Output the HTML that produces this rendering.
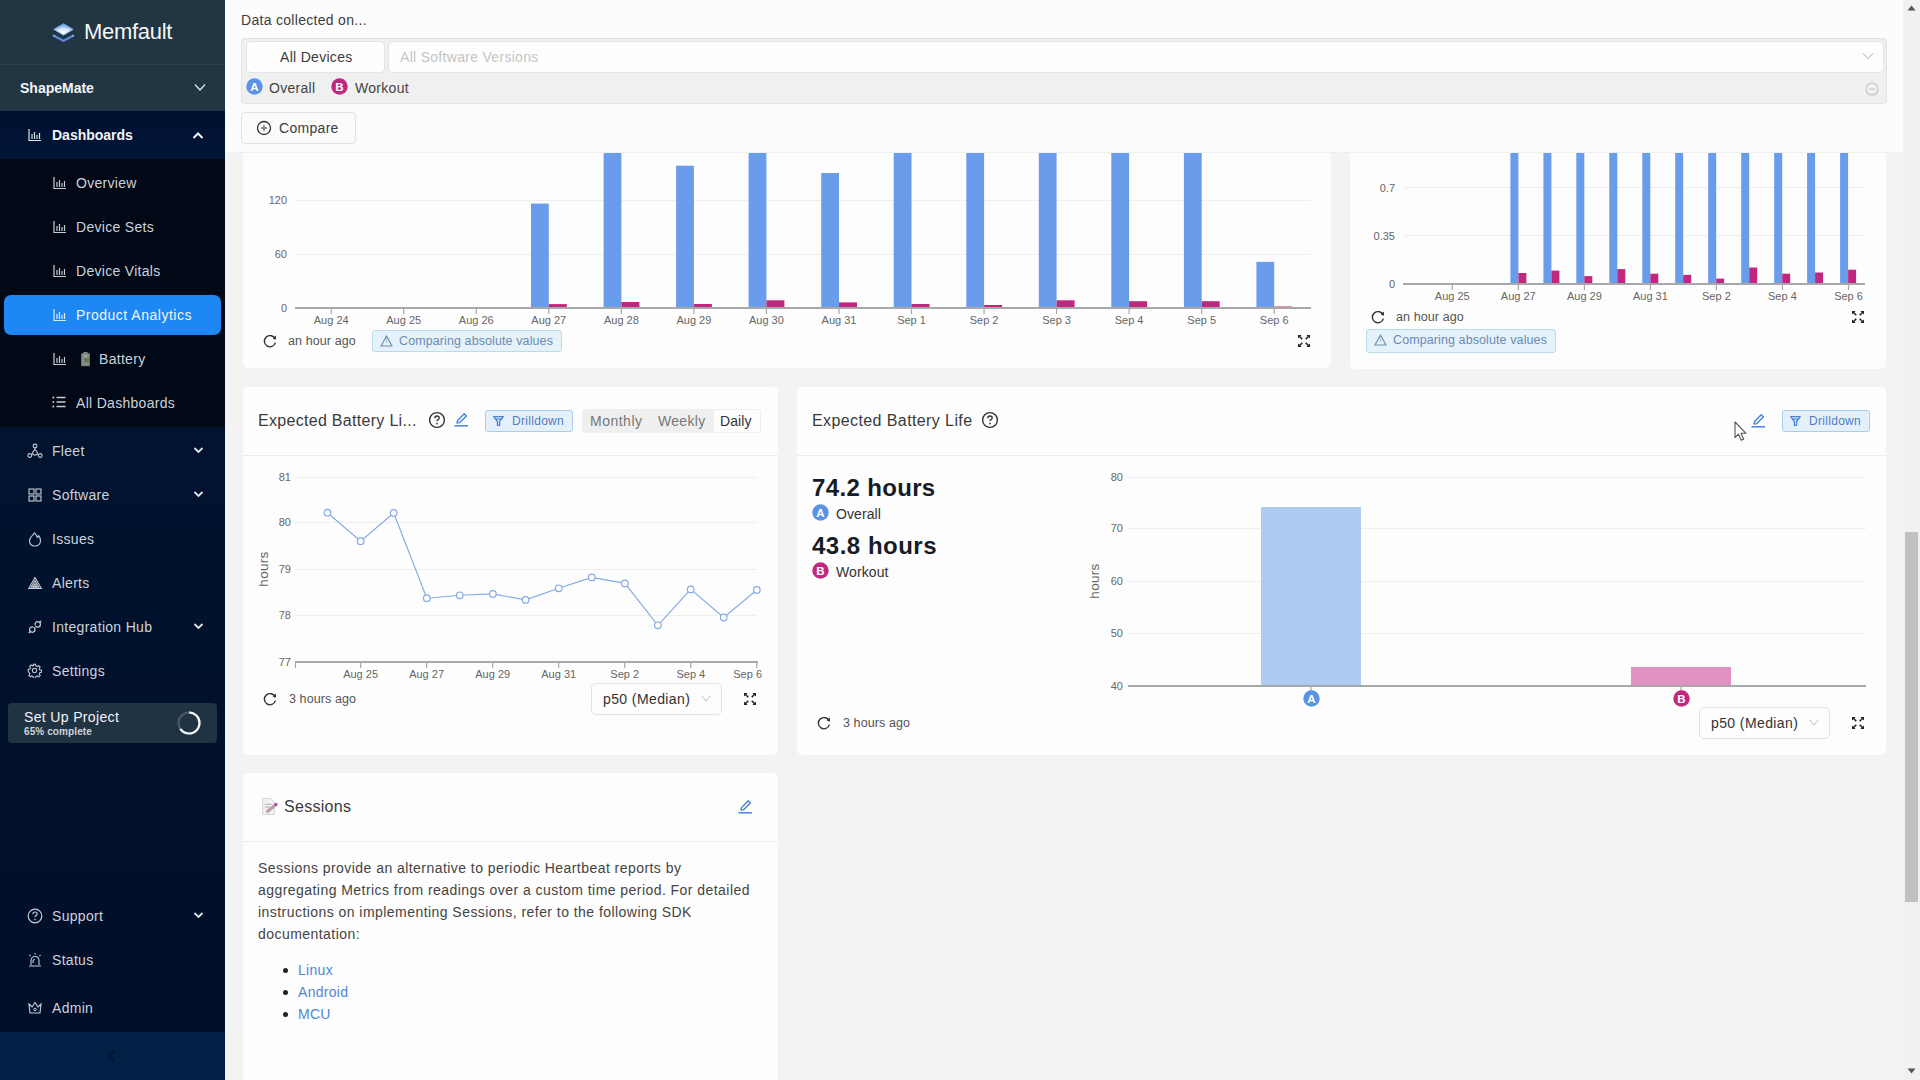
<!DOCTYPE html>
<html><head><meta charset="utf-8">
<style>
*{box-sizing:border-box;margin:0;padding:0}
html,body{width:1920px;height:1080px;overflow:hidden;background:#f3f3f3;font-family:"Liberation Sans",sans-serif;color:#333}
.abs{position:absolute}
#sb{position:absolute;left:0;top:0;width:225px;height:1080px;background:linear-gradient(#01132f 427px,#010f29 1000px)}
#sb .sec1{position:absolute;left:0;top:0;width:225px;height:111px;background:#213543}
#sb .logo-div{position:absolute;left:0;top:64px;width:225px;height:1px;background:#2f3e4b}
#sb .dash{position:absolute;left:0;top:111px;width:225px;height:48px;background:linear-gradient(#001030,#011637)}
#sb .subs{position:absolute;left:0;top:159px;width:225px;height:268px;background:#010816}
#sb .bot{position:absolute;left:0;top:1032px;width:225px;height:48px;background:#012146}
.nav{position:absolute;font-size:14px;letter-spacing:0.3px;color:#ccd2db;white-space:nowrap;line-height:16px}
.nav.w{color:#f3f5f8}
.ic{position:absolute}
#main{position:absolute;left:225px;top:0;width:1678px;height:1080px;background:#f3f3f3;overflow:hidden}
#hdr{position:absolute;left:225px;top:0;width:1678px;height:153px;background:#fcfcfc;border-bottom:1px solid #efefef;z-index:5}
.t{position:absolute;white-space:nowrap;letter-spacing:0.3px}
.card{position:absolute;background:#fdfdfd;border-radius:5px}
#scroll{position:absolute;left:1903px;top:0;width:17px;height:1080px;background:#f1f1f1}
</style></head><body>

<!-- SIDEBAR -->
<div id="sb">
  <div class="sec1"></div>
  <div class="logo-div"></div>
  <div class="dash"></div>
  <div class="subs"></div>
  <div class="bot"></div>
  <!-- logo -->
  <svg class="ic" style="left:52px;top:22px" width="23" height="21" viewBox="0 0 23 21">
    <defs><radialGradient id="lg1" cx="0.5" cy="0.75" r="0.7"><stop offset="0" stop-color="#ffffff"/><stop offset="0.45" stop-color="#d8e6fa"/><stop offset="1" stop-color="#5f98ea"/></radialGradient></defs>
    <path d="M1.6 12.8 L11.5 18 L21.4 12.8 L22 14.1 L11.5 19.6 L1 14.1 Z" fill="#5b92e6" stroke="#5b92e6" stroke-width="0.8" stroke-linejoin="round"/>
    <path d="M1.2 12.9 L3.2 14 L2 14.7 Z M21.8 12.9 L19.8 14 L21 14.7 Z" fill="#dfe9f8"/>
    <path d="M11.5 1.8 L21.2 7.4 L11.5 13.2 L1.8 7.4 Z" fill="url(#lg1)" stroke="#7aa8ee" stroke-width="1" stroke-linejoin="round"/>
  </svg>
  <div class="nav" style="left:84px;top:19px;font-size:22px;line-height:26px;letter-spacing:-0.3px;color:#f4f6f8">Memfault</div>
  <div class="nav" style="left:20px;top:80px;font-weight:700;color:#f4f6f8;letter-spacing:0">ShapeMate</div>
  <svg class="ic" style="left:194px;top:83px" width="12" height="9" viewBox="0 0 12 9"><path d="M1 1.5 L6 7 L11 1.5" fill="none" stroke="#dfe3e8" stroke-width="1.3"/></svg>

  <!-- Dashboards -->
  <svg class="ic" style="left:28px;top:128px" width="14" height="14" viewBox="0 0 14 14"><path d="M1 1 V12.5 H13 M4 11 V6 M6.5 11 V4 M9 11 V7 M11.5 11 V5" fill="none" stroke="#dfe3ea" stroke-width="1.2"/></svg>
  <div class="nav w" style="left:52px;top:127px;font-weight:700;letter-spacing:0">Dashboards</div>
  <svg class="ic" style="left:192px;top:131px" width="12" height="9" viewBox="0 0 12 9"><path d="M1.5 7 L6 2.5 L10.5 7" fill="none" stroke="#f0f2f5" stroke-width="2"/></svg>

  <!-- sub items -->
  <div id="subitems"></div>
  <svg class="ic" style="left:53px;top:176px" width="14" height="14" viewBox="0 0 14 14"><path d="M1 1 V12.5 H13 M4 11 V6 M6.5 11 V4 M9 11 V7 M11.5 11 V5" fill="none" stroke="#c9ced6" stroke-width="1.2"/></svg>
  <div class="nav" style="left:76px;top:175px">Overview</div>
  <svg class="ic" style="left:53px;top:220px" width="14" height="14" viewBox="0 0 14 14"><path d="M1 1 V12.5 H13 M4 11 V6 M6.5 11 V4 M9 11 V7 M11.5 11 V5" fill="none" stroke="#c9ced6" stroke-width="1.2"/></svg>
  <div class="nav" style="left:76px;top:219px">Device Sets</div>
  <svg class="ic" style="left:53px;top:264px" width="14" height="14" viewBox="0 0 14 14"><path d="M1 1 V12.5 H13 M4 11 V6 M6.5 11 V4 M9 11 V7 M11.5 11 V5" fill="none" stroke="#c9ced6" stroke-width="1.2"/></svg>
  <div class="nav" style="left:76px;top:263px">Device Vitals</div>

  <div class="abs" style="left:4px;top:295px;width:217px;height:40px;border-radius:7px;background:#1d87f4"></div>
  <svg class="ic" style="left:53px;top:308px" width="14" height="14" viewBox="0 0 14 14"><path d="M1 1 V12.5 H13 M4 11 V6 M6.5 11 V4 M9 11 V7 M11.5 11 V5" fill="none" stroke="#dce9fb" stroke-width="1.2"/></svg>
  <div class="nav w" style="left:76px;top:307px;letter-spacing:0.5px">Product Analytics</div>

  <svg class="ic" style="left:53px;top:352px" width="14" height="14" viewBox="0 0 14 14"><path d="M1 1 V12.5 H13 M4 11 V6 M6.5 11 V4 M9 11 V7 M11.5 11 V5" fill="none" stroke="#c9ced6" stroke-width="1.2"/></svg>
  <svg class="ic" style="left:81px;top:352px" width="9" height="15" viewBox="0 0 9 15"><rect x="2.5" y="0" width="4" height="1.5" fill="#8d8d8d"/><rect x="0" y="1.3" width="9" height="13" rx="0.8" fill="#5f7a4c"/><rect x="1.2" y="1.6" width="6.6" height="4.4" fill="#8e8e8e"/><rect x="0.9" y="6" width="2.2" height="4" fill="#8a8a8a"/><rect x="0.9" y="10.3" width="7.2" height="3.2" fill="#8c8c8c"/><circle cx="4.5" cy="4.2" r="1.2" fill="#a0a0a0"/></svg>
  <div class="nav" style="left:99px;top:351px">Battery</div>

  <svg class="ic" style="left:52px;top:396px" width="14" height="12" viewBox="0 0 14 12"><path d="M4.5 1.5 H13.5 M4.5 6 H13.5 M4.5 10.5 H13.5" stroke="#c9ced6" stroke-width="1.3"/><circle cx="1.3" cy="1.5" r="1" fill="#c9ced6"/><circle cx="1.3" cy="6" r="1" fill="#c9ced6"/><circle cx="1.3" cy="10.5" r="1" fill="#c9ced6"/></svg>
  <div class="nav" style="left:76px;top:395px">All Dashboards</div>

  <!-- main nav -->
  <svg class="ic" style="left:27px;top:443px" width="16" height="16" viewBox="0 0 16 16"><circle cx="8" cy="3" r="1.9" fill="none" stroke="#c9ced6" stroke-width="1.1"/><path d="M8 4.9 V6.6 M5.6 11.2 L6 8.6 L8 6.6 L10 8.6 L10.4 11.2 L8 12.3 Z" fill="none" stroke="#c9ced6" stroke-width="1.1" stroke-linejoin="round"/><circle cx="2.8" cy="12.5" r="1.9" fill="none" stroke="#c9ced6" stroke-width="1.1"/><circle cx="13.2" cy="12.5" r="1.9" fill="none" stroke="#c9ced6" stroke-width="1.1"/></svg>
  <div class="nav" style="left:52px;top:443px">Fleet</div>
  <svg class="ic" style="left:193px;top:446px" width="11" height="8" viewBox="0 0 11 8"><path d="M1.5 2 L5.5 6 L9.5 2" fill="none" stroke="#dfe3e8" stroke-width="1.8"/></svg>

  <svg class="ic" style="left:28px;top:488px" width="14" height="14" viewBox="0 0 14 14"><rect x="1" y="1" width="5" height="5" fill="none" stroke="#c9ced6" stroke-width="1.1"/><rect x="8" y="1" width="5" height="5" fill="none" stroke="#c9ced6" stroke-width="1.1"/><rect x="1" y="8" width="5" height="5" fill="none" stroke="#c9ced6" stroke-width="1.1"/><rect x="8" y="8" width="5" height="5" fill="none" stroke="#c9ced6" stroke-width="1.1"/></svg>
  <div class="nav" style="left:52px;top:487px">Software</div>
  <svg class="ic" style="left:193px;top:490px" width="11" height="8" viewBox="0 0 11 8"><path d="M1.5 2 L5.5 6 L9.5 2" fill="none" stroke="#dfe3e8" stroke-width="1.8"/></svg>

  <svg class="ic" style="left:28px;top:531px" width="14" height="16" viewBox="0 0 14 16"><path d="M6.5 1.8 C8.2 3.5 9 5 9.2 6.6 C9.8 5.8 10.2 5.2 10.6 4.6 C11.8 6 12.5 7.8 12.5 9.8 C12.5 13 10.2 15 7 15 C3.8 15 1.5 13 1.5 9.8 C1.5 7.6 2.8 5.8 4.2 4.6 C5 3.8 6 2.8 6.5 1.8 Z" fill="none" stroke="#c9ced6" stroke-width="1.1" stroke-linejoin="round"/></svg>
  <div class="nav" style="left:52px;top:531px">Issues</div>

  <svg class="ic" style="left:27px;top:575px" width="16" height="14" viewBox="0 0 16 14"><path d="M8 2.6 L14.4 13.6 H1.6 Z M8 5.6 L11.9 12.2 H4.1 Z M8 8.4 L9.7 11.2 H6.3 Z" fill="none" stroke="#c9ced6" stroke-width="1.05"/></svg>
  <div class="nav" style="left:52px;top:575px">Alerts</div>

  <svg class="ic" style="left:27px;top:619px" width="16" height="16" viewBox="0 0 16 16"><circle cx="5.3" cy="10.6" r="2.7" fill="none" stroke="#c9ced6" stroke-width="1.2"/><circle cx="10.7" cy="5.4" r="2.7" fill="none" stroke="#c9ced6" stroke-width="1.2"/><path d="M3.4 12.5 L1.8 14.1 M12.6 3.5 L14.2 1.9" stroke="#c9ced6" stroke-width="1.3"/><path d="M6.2 8 L8.2 6.2" stroke="#010f2a" stroke-width="1.4"/></svg>
  <div class="nav" style="left:52px;top:619px">Integration Hub</div>
  <svg class="ic" style="left:193px;top:622px" width="11" height="8" viewBox="0 0 11 8"><path d="M1.5 2 L5.5 6 L9.5 2" fill="none" stroke="#dfe3e8" stroke-width="1.8"/></svg>

  <svg class="ic" style="left:27px;top:663px" width="15" height="15" viewBox="0 0 24 24"><path d="M12 8.5a3.5 3.5 0 1 0 0 7a3.5 3.5 0 1 0 0-7z M10.3 2h3.4l.6 2.8 2 .9 2.4-1.6 2.4 2.4-1.6 2.4.9 2 2.8.6v3.4l-2.8.6-.9 2 1.6 2.4-2.4 2.4-2.4-1.6-2 .9-.6 2.8h-3.4l-.6-2.8-2-.9-2.4 1.6-2.4-2.4 1.6-2.4-.9-2L2 13.7v-3.4l2.8-.6.9-2L4.1 5.3l2.4-2.4 2.4 1.6 2-.9z" fill="none" stroke="#c9ced6" stroke-width="1.7"/></svg>
  <div class="nav" style="left:52px;top:663px">Settings</div>

  <!-- setup project -->
  <div class="abs" style="left:8px;top:703px;width:209px;height:40px;border-radius:4px;background:#203343"></div>
  <div class="nav" style="left:24px;top:709px;color:#f2f4f6;letter-spacing:0.35px">Set Up Project</div>
  <div class="nav" style="left:24px;top:726px;font-size:10px;line-height:12px;font-weight:700;color:#cdd3da;letter-spacing:0.1px">65% complete</div>
  <svg class="ic" style="left:176px;top:710px" width="26" height="26" viewBox="0 0 26 26"><circle cx="13" cy="13" r="10.5" fill="none" stroke="#4a5866" stroke-width="2.2"/><circle cx="13" cy="13" r="10.5" fill="none" stroke="#f4f6f8" stroke-width="2.2" stroke-dasharray="42.9 66" transform="rotate(-90 13 13)"/></svg>

  <!-- bottom nav -->
  <svg class="ic" style="left:27px;top:908px" width="16" height="16" viewBox="0 0 16 16"><circle cx="8" cy="8" r="6.8" fill="none" stroke="#c9ced6" stroke-width="1.2"/><path d="M5.8 6.2 C5.8 4.8 6.8 4 8 4 C9.3 4 10.2 4.8 10.2 6 C10.2 7.5 8 7.6 8 9.3" fill="none" stroke="#c9ced6" stroke-width="1.2"/><circle cx="8" cy="11.6" r="0.8" fill="#c9ced6"/></svg>
  <div class="nav" style="left:52px;top:908px">Support</div>
  <svg class="ic" style="left:193px;top:911px" width="11" height="8" viewBox="0 0 11 8"><path d="M1.5 2 L5.5 6 L9.5 2" fill="none" stroke="#dfe3e8" stroke-width="1.8"/></svg>

  <svg class="ic" style="left:28px;top:952px" width="14" height="15" viewBox="0 0 14 15"><path d="M3 13 V9 C3 6.2 4.8 4.5 7 4.5 C9.2 4.5 11 6.2 11 9 V13 M1 14 H13 M7 1 V2.5 M1.5 3 L2.5 4 M12.5 3 L11.5 4 M5 11 V9.5 C5 8.5 5.8 7.5 7 7.5" fill="none" stroke="#c9ced6" stroke-width="1.1"/></svg>
  <div class="nav" style="left:52px;top:952px">Status</div>

  <svg class="ic" style="left:28px;top:1001px" width="14" height="13" viewBox="0 0 14 13"><path d="M1 3 L4 6 L7 1.5 L10 6 L13 3 L12 12 H2 Z" fill="none" stroke="#c9ced6" stroke-width="1.1"/><circle cx="7" cy="8.5" r="1.3" fill="none" stroke="#c9ced6" stroke-width="1"/></svg>
  <div class="nav" style="left:52px;top:1000px">Admin</div>

  <svg class="ic" style="left:107px;top:1049px" width="9" height="13" viewBox="0 0 9 13"><path d="M7 1.5 L2.5 6.5 L7 11.5" fill="none" stroke="#061326" stroke-width="1.6"/></svg>
</div>

<!-- MAIN -->
<div id="main"></div>
<div class="card" style="left:243px;top:60px;width:1088px;height:308px"></div>
<svg class="abs" style="left:0;top:0;z-index:1" width="1920" height="1080">
<line x1="295" y1="146.5" x2="1311" y2="146.5" stroke="#eeeeee" stroke-width="1"/>
<line x1="295" y1="200.5" x2="1311" y2="200.5" stroke="#eeeeee" stroke-width="1"/>
<line x1="295" y1="254.5" x2="1311" y2="254.5" stroke="#eeeeee" stroke-width="1"/>
<rect x="531.0" y="203.6" width="17.8" height="104.4" fill="#6a9cec"/>
<rect x="548.8" y="304.1" width="18" height="3.9" fill="#c0287f"/>
<rect x="603.6" y="60" width="17.8" height="248.0" fill="#6a9cec"/>
<rect x="621.4" y="302" width="18" height="6.0" fill="#c0287f"/>
<rect x="676.1" y="165.7" width="17.8" height="142.3" fill="#6a9cec"/>
<rect x="693.9" y="304" width="18" height="4.0" fill="#c0287f"/>
<rect x="748.6" y="60" width="17.8" height="248.0" fill="#6a9cec"/>
<rect x="766.4" y="300.3" width="18" height="7.7" fill="#c0287f"/>
<rect x="821.2" y="173" width="17.8" height="135.0" fill="#6a9cec"/>
<rect x="839.0" y="302.4" width="18" height="5.6" fill="#c0287f"/>
<rect x="893.7" y="60" width="17.8" height="248.0" fill="#6a9cec"/>
<rect x="911.5" y="304" width="18" height="4.0" fill="#c0287f"/>
<rect x="966.3" y="60" width="17.8" height="248.0" fill="#6a9cec"/>
<rect x="984.1" y="305" width="18" height="3.0" fill="#c0287f"/>
<rect x="1038.8" y="60" width="17.8" height="248.0" fill="#6a9cec"/>
<rect x="1056.6" y="300.3" width="18" height="7.7" fill="#c0287f"/>
<rect x="1111.3" y="60" width="17.8" height="248.0" fill="#6a9cec"/>
<rect x="1129.1" y="301.2" width="18" height="6.8" fill="#c0287f"/>
<rect x="1183.9" y="60" width="17.8" height="248.0" fill="#6a9cec"/>
<rect x="1201.7" y="301.2" width="18" height="6.8" fill="#c0287f"/>
<rect x="1256.4" y="261.9" width="17.8" height="46.1" fill="#6a9cec"/>
<rect x="1274.2" y="306.5" width="18" height="1.5" fill="#c0287f"/>
<line x1="295" y1="308" x2="1311" y2="308" stroke="#a8a8a8" stroke-width="2"/>
<line x1="331.2" y1="309" x2="331.2" y2="314" stroke="#a8a8a8" stroke-width="1.2"/>
<text x="331.2" y="324" font-family="Liberation Sans" font-size="11" fill="#666" text-anchor="middle">Aug 24</text>
<line x1="403.7" y1="309" x2="403.7" y2="314" stroke="#a8a8a8" stroke-width="1.2"/>
<text x="403.7" y="324" font-family="Liberation Sans" font-size="11" fill="#666" text-anchor="middle">Aug 25</text>
<line x1="476.3" y1="309" x2="476.3" y2="314" stroke="#a8a8a8" stroke-width="1.2"/>
<text x="476.3" y="324" font-family="Liberation Sans" font-size="11" fill="#666" text-anchor="middle">Aug 26</text>
<line x1="548.8" y1="309" x2="548.8" y2="314" stroke="#a8a8a8" stroke-width="1.2"/>
<text x="548.8" y="324" font-family="Liberation Sans" font-size="11" fill="#666" text-anchor="middle">Aug 27</text>
<line x1="621.4" y1="309" x2="621.4" y2="314" stroke="#a8a8a8" stroke-width="1.2"/>
<text x="621.4" y="324" font-family="Liberation Sans" font-size="11" fill="#666" text-anchor="middle">Aug 28</text>
<line x1="693.9" y1="309" x2="693.9" y2="314" stroke="#a8a8a8" stroke-width="1.2"/>
<text x="693.9" y="324" font-family="Liberation Sans" font-size="11" fill="#666" text-anchor="middle">Aug 29</text>
<line x1="766.4" y1="309" x2="766.4" y2="314" stroke="#a8a8a8" stroke-width="1.2"/>
<text x="766.4" y="324" font-family="Liberation Sans" font-size="11" fill="#666" text-anchor="middle">Aug 30</text>
<line x1="839.0" y1="309" x2="839.0" y2="314" stroke="#a8a8a8" stroke-width="1.2"/>
<text x="839.0" y="324" font-family="Liberation Sans" font-size="11" fill="#666" text-anchor="middle">Aug 31</text>
<line x1="911.5" y1="309" x2="911.5" y2="314" stroke="#a8a8a8" stroke-width="1.2"/>
<text x="911.5" y="324" font-family="Liberation Sans" font-size="11" fill="#666" text-anchor="middle">Sep 1</text>
<line x1="984.1" y1="309" x2="984.1" y2="314" stroke="#a8a8a8" stroke-width="1.2"/>
<text x="984.1" y="324" font-family="Liberation Sans" font-size="11" fill="#666" text-anchor="middle">Sep 2</text>
<line x1="1056.6" y1="309" x2="1056.6" y2="314" stroke="#a8a8a8" stroke-width="1.2"/>
<text x="1056.6" y="324" font-family="Liberation Sans" font-size="11" fill="#666" text-anchor="middle">Sep 3</text>
<line x1="1129.1" y1="309" x2="1129.1" y2="314" stroke="#a8a8a8" stroke-width="1.2"/>
<text x="1129.1" y="324" font-family="Liberation Sans" font-size="11" fill="#666" text-anchor="middle">Sep 4</text>
<line x1="1201.7" y1="309" x2="1201.7" y2="314" stroke="#a8a8a8" stroke-width="1.2"/>
<text x="1201.7" y="324" font-family="Liberation Sans" font-size="11" fill="#666" text-anchor="middle">Sep 5</text>
<line x1="1274.2" y1="309" x2="1274.2" y2="314" stroke="#a8a8a8" stroke-width="1.2"/>
<text x="1274.2" y="324" font-family="Liberation Sans" font-size="11" fill="#666" text-anchor="middle">Sep 6</text>
<text x="287" y="204" font-family="Liberation Sans" font-size="11" fill="#666" text-anchor="end">120</text>
<text x="287" y="258" font-family="Liberation Sans" font-size="11" fill="#666" text-anchor="end">60</text>
<text x="287" y="312" font-family="Liberation Sans" font-size="11" fill="#666" text-anchor="end">0</text>
</svg>
<svg class="abs" style="left:262px;top:333px;z-index:2" width="16" height="16" viewBox="0 0 16 16"><path d="M13.2 6.2 A5.6 5.6 0 1 0 13.4 9.6" fill="none" stroke="#333" stroke-width="1.4"/><path d="M10.6 5.6 L14 6.4 L13.9 2.6 Z" fill="#333"/></svg>
<div class="t" style="left:288px;top:334px;font-size:12.5px;line-height:15px;color:#555;letter-spacing:0.1px;font-weight:400;z-index:2;">an hour ago</div>
<div class="abs" style="left:372px;top:330px;width:190px;height:22px;background:#e5f2f9;border:1px solid #b9dcec;border-radius:3px;z-index:2"></div><svg class="abs" style="left:380px;top:335px;z-index:2" width="13" height="12" viewBox="0 0 13 12"><path d="M6.5 1 L12 11 H1 Z" fill="none" stroke="#6d8cb0" stroke-width="1.2" stroke-linejoin="round"/><path d="M6.5 4.5 V7.8" stroke="#9bb6d0" stroke-width="1"/></svg><div class="t" style="left:399px;top:334px;font-size:12.5px;line-height:15px;color:#6b8bb3;letter-spacing:0.1px;z-index:2">Comparing absolute values</div>
<svg class="abs" style="left:1298px;top:335px;z-index:2" width="12" height="12" viewBox="0 0 12 12"><path d="M0.5 0.5 L4.3 4.3 M11.5 0.5 L7.7 4.3 M0.5 11.5 L4.3 7.7 M11.5 11.5 L7.7 7.7" stroke="#222" stroke-width="1.5"/><path d="M0 0 H3.6 L0 3.6 Z M12 0 H8.4 L12 3.6 Z M0 12 H3.6 L0 8.4 Z M12 12 H8.4 L12 8.4 Z" fill="#222"/></svg>
<div class="card" style="left:1350px;top:60px;width:536px;height:309px"></div>
<svg class="abs" style="left:0;top:0;z-index:1" width="1920" height="1080">
<line x1="1403" y1="139.5" x2="1865" y2="139.5" stroke="#eeeeee" stroke-width="1"/>
<line x1="1403" y1="187.5" x2="1865" y2="187.5" stroke="#eeeeee" stroke-width="1"/>
<line x1="1403" y1="235.5" x2="1865" y2="235.5" stroke="#eeeeee" stroke-width="1"/>
<rect x="1510.4" y="60" width="8" height="223.8" fill="#6a9cec"/>
<rect x="1518.4" y="273" width="8" height="10.8" fill="#c0287f"/>
<rect x="1543.4" y="60" width="8" height="223.8" fill="#6a9cec"/>
<rect x="1551.4" y="270.6" width="8" height="13.2" fill="#c0287f"/>
<rect x="1576.3" y="60" width="8" height="223.8" fill="#6a9cec"/>
<rect x="1584.3" y="276.1" width="8" height="7.7" fill="#c0287f"/>
<rect x="1609.3" y="60" width="8" height="223.8" fill="#6a9cec"/>
<rect x="1617.3" y="269.1" width="8" height="14.7" fill="#c0287f"/>
<rect x="1642.3" y="60" width="8" height="223.8" fill="#6a9cec"/>
<rect x="1650.3" y="273.7" width="8" height="10.1" fill="#c0287f"/>
<rect x="1675.2" y="60" width="8" height="223.8" fill="#6a9cec"/>
<rect x="1683.2" y="274.9" width="8" height="8.9" fill="#c0287f"/>
<rect x="1708.2" y="60" width="8" height="223.8" fill="#6a9cec"/>
<rect x="1716.2" y="278.6" width="8" height="5.2" fill="#c0287f"/>
<rect x="1741.2" y="60" width="8" height="223.8" fill="#6a9cec"/>
<rect x="1749.2" y="267.5" width="8" height="16.3" fill="#c0287f"/>
<rect x="1774.2" y="60" width="8" height="223.8" fill="#6a9cec"/>
<rect x="1782.2" y="273.7" width="8" height="10.1" fill="#c0287f"/>
<rect x="1807.1" y="60" width="8" height="223.8" fill="#6a9cec"/>
<rect x="1815.1" y="272.5" width="8" height="11.3" fill="#c0287f"/>
<rect x="1840.1" y="60" width="8" height="223.8" fill="#6a9cec"/>
<rect x="1848.1" y="269.7" width="8" height="14.1" fill="#c0287f"/>
<line x1="1403" y1="284" x2="1865" y2="284" stroke="#a8a8a8" stroke-width="2"/>
<line x1="1452.3" y1="285" x2="1452.3" y2="290" stroke="#a8a8a8" stroke-width="1.2"/>
<text x="1452.3" y="300" font-family="Liberation Sans" font-size="11" fill="#666" text-anchor="middle">Aug 25</text>
<line x1="1518.3" y1="285" x2="1518.3" y2="290" stroke="#a8a8a8" stroke-width="1.2"/>
<text x="1518.3" y="300" font-family="Liberation Sans" font-size="11" fill="#666" text-anchor="middle">Aug 27</text>
<line x1="1584.4" y1="285" x2="1584.4" y2="290" stroke="#a8a8a8" stroke-width="1.2"/>
<text x="1584.4" y="300" font-family="Liberation Sans" font-size="11" fill="#666" text-anchor="middle">Aug 29</text>
<line x1="1650.4" y1="285" x2="1650.4" y2="290" stroke="#a8a8a8" stroke-width="1.2"/>
<text x="1650.4" y="300" font-family="Liberation Sans" font-size="11" fill="#666" text-anchor="middle">Aug 31</text>
<line x1="1716.4" y1="285" x2="1716.4" y2="290" stroke="#a8a8a8" stroke-width="1.2"/>
<text x="1716.4" y="300" font-family="Liberation Sans" font-size="11" fill="#666" text-anchor="middle">Sep 2</text>
<line x1="1782.4" y1="285" x2="1782.4" y2="290" stroke="#a8a8a8" stroke-width="1.2"/>
<text x="1782.4" y="300" font-family="Liberation Sans" font-size="11" fill="#666" text-anchor="middle">Sep 4</text>
<line x1="1848.5" y1="285" x2="1848.5" y2="290" stroke="#a8a8a8" stroke-width="1.2"/>
<text x="1848.5" y="300" font-family="Liberation Sans" font-size="11" fill="#666" text-anchor="middle">Sep 6</text>
<text x="1395" y="191.6" font-family="Liberation Sans" font-size="11" fill="#666" text-anchor="end">0.7</text>
<text x="1395" y="239.9" font-family="Liberation Sans" font-size="11" fill="#666" text-anchor="end">0.35</text>
<text x="1395" y="287.8" font-family="Liberation Sans" font-size="11" fill="#666" text-anchor="end">0</text>
</svg>
<svg class="abs" style="left:1370px;top:309px;z-index:2" width="16" height="16" viewBox="0 0 16 16"><path d="M13.2 6.2 A5.6 5.6 0 1 0 13.4 9.6" fill="none" stroke="#333" stroke-width="1.4"/><path d="M10.6 5.6 L14 6.4 L13.9 2.6 Z" fill="#333"/></svg>
<div class="t" style="left:1396px;top:310px;font-size:12.5px;line-height:15px;color:#555;letter-spacing:0.1px;font-weight:400;z-index:2;">an hour ago</div>
<div class="abs" style="left:1366px;top:329px;width:190px;height:24px;background:#e5f2f9;border:1px solid #b9dcec;border-radius:3px;z-index:2"></div><svg class="abs" style="left:1374px;top:334px;z-index:2" width="13" height="12" viewBox="0 0 13 12"><path d="M6.5 1 L12 11 H1 Z" fill="none" stroke="#6d8cb0" stroke-width="1.2" stroke-linejoin="round"/><path d="M6.5 4.5 V7.8" stroke="#9bb6d0" stroke-width="1"/></svg><div class="t" style="left:1393px;top:333px;font-size:12.5px;line-height:15px;color:#6b8bb3;letter-spacing:0.1px;z-index:2">Comparing absolute values</div>
<svg class="abs" style="left:1852px;top:311px;z-index:2" width="12" height="12" viewBox="0 0 12 12"><path d="M0.5 0.5 L4.3 4.3 M11.5 0.5 L7.7 4.3 M0.5 11.5 L4.3 7.7 M11.5 11.5 L7.7 7.7" stroke="#222" stroke-width="1.5"/><path d="M0 0 H3.6 L0 3.6 Z M12 0 H8.4 L12 3.6 Z M0 12 H3.6 L0 8.4 Z M12 12 H8.4 L12 8.4 Z" fill="#222"/></svg>
<div class="card" style="left:243px;top:387px;width:535px;height:368px"></div>
<div class="abs" style="left:243px;top:455px;width:535px;height:1px;background:#ededed;z-index:1"></div>
<div class="t" style="left:258px;top:411px;font-size:16px;line-height:19px;color:#3a3a3a;letter-spacing:0.3px;font-weight:400;z-index:2;">Expected Battery Li...</div>
<svg class="abs" style="left:428px;top:411px;z-index:2" width="18" height="18" viewBox="0 0 18 18"><circle cx="9" cy="9" r="7.4" fill="none" stroke="#333" stroke-width="1.4"/><path d="M6.8 7.2 C6.8 5.8 7.8 5 9 5 C10.3 5 11.2 5.8 11.2 7 C11.2 8.4 9 8.6 9 10.2" fill="none" stroke="#333" stroke-width="1.4"/><circle cx="9" cy="12.6" r="0.9" fill="#333"/></svg>
<svg class="abs" style="left:454px;top:412px;z-index:2" width="15" height="15" viewBox="0 0 15 15"><path d="M3 11 L3.6 8.4 L10.2 1.8 L12.4 4 L5.8 10.6 Z" fill="none" stroke="#4a82dc" stroke-width="1.4" stroke-linejoin="round"/><path d="M0.5 13.8 H14" stroke="#4a82dc" stroke-width="1.5"/></svg>
<div class="abs" style="left:485px;top:410px;width:88px;height:22px;background:#e4f1fb;border:1px solid #a9cdee;border-radius:3px;z-index:2"></div><svg class="abs" style="left:493px;top:416px;z-index:2" width="11" height="10" viewBox="0 0 11 10"><path d="M0.7 0.7 H10.3 L6.6 5.5 V9.3 H4.4 V5.5 Z" fill="none" stroke="#4c83d6" stroke-width="1.3" stroke-linejoin="round"/><path d="M2.5 3 H8.5" stroke="#4c83d6" stroke-width="1.2"/></svg><div class="t" style="left:512px;top:414px;font-size:12px;line-height:15px;color:#4f7cc2;letter-spacing:0.3px;z-index:2">Drilldown</div>
<div class="abs" style="left:582px;top:409px;width:179px;height:24px;background:#efefef;border-radius:3px;z-index:2"></div>
<div class="abs" style="left:714px;top:410px;width:46px;height:22px;background:#fdfdfd;border-radius:2px;z-index:2"></div>
<div class="t" style="left:590px;top:413px;font-size:14px;line-height:16px;color:#777;letter-spacing:0.5px;font-weight:400;z-index:2;">Monthly</div>
<div class="t" style="left:658px;top:413px;font-size:14px;line-height:16px;color:#777;letter-spacing:0.3px;font-weight:400;z-index:2;">Weekly</div>
<div class="t" style="left:720px;top:413px;font-size:14px;line-height:16px;color:#333;letter-spacing:0.1px;font-weight:400;z-index:2;">Daily</div>
<svg class="abs" style="left:0;top:0;z-index:1" width="1920" height="1080">
<line x1="295" y1="477.5" x2="757" y2="477.5" stroke="#eeeeee" stroke-width="1"/>
<text x="291" y="481" font-family="Liberation Sans" font-size="11" fill="#666" text-anchor="end">81</text>
<line x1="295" y1="522.5" x2="757" y2="522.5" stroke="#eeeeee" stroke-width="1"/>
<text x="291" y="526" font-family="Liberation Sans" font-size="11" fill="#666" text-anchor="end">80</text>
<line x1="295" y1="569.5" x2="757" y2="569.5" stroke="#eeeeee" stroke-width="1"/>
<text x="291" y="573" font-family="Liberation Sans" font-size="11" fill="#666" text-anchor="end">79</text>
<line x1="295" y1="615.5" x2="757" y2="615.5" stroke="#eeeeee" stroke-width="1"/>
<text x="291" y="619" font-family="Liberation Sans" font-size="11" fill="#666" text-anchor="end">78</text>
<text x="291" y="666" font-family="Liberation Sans" font-size="11" fill="#666" text-anchor="end">77</text>
<line x1="295" y1="662" x2="758" y2="662" stroke="#a8a8a8" stroke-width="2"/>
<line x1="360.6" y1="663" x2="360.6" y2="668" stroke="#a8a8a8" stroke-width="1.2"/>
<text x="360.6" y="678" font-family="Liberation Sans" font-size="11" fill="#666" text-anchor="middle">Aug 25</text>
<line x1="426.6" y1="663" x2="426.6" y2="668" stroke="#a8a8a8" stroke-width="1.2"/>
<text x="426.6" y="678" font-family="Liberation Sans" font-size="11" fill="#666" text-anchor="middle">Aug 27</text>
<line x1="492.7" y1="663" x2="492.7" y2="668" stroke="#a8a8a8" stroke-width="1.2"/>
<text x="492.7" y="678" font-family="Liberation Sans" font-size="11" fill="#666" text-anchor="middle">Aug 29</text>
<line x1="558.7" y1="663" x2="558.7" y2="668" stroke="#a8a8a8" stroke-width="1.2"/>
<text x="558.7" y="678" font-family="Liberation Sans" font-size="11" fill="#666" text-anchor="middle">Aug 31</text>
<line x1="624.7" y1="663" x2="624.7" y2="668" stroke="#a8a8a8" stroke-width="1.2"/>
<text x="624.7" y="678" font-family="Liberation Sans" font-size="11" fill="#666" text-anchor="middle">Sep 2</text>
<line x1="690.8" y1="663" x2="690.8" y2="668" stroke="#a8a8a8" stroke-width="1.2"/>
<text x="690.8" y="678" font-family="Liberation Sans" font-size="11" fill="#666" text-anchor="middle">Sep 4</text>
<line x1="756.8" y1="663" x2="756.8" y2="668" stroke="#a8a8a8" stroke-width="1.2"/>
<text x="762.0" y="678" font-family="Liberation Sans" font-size="11" fill="#666" text-anchor="end">Sep 6</text>
<line x1="295.5" y1="662" x2="295.5" y2="668" stroke="#a8a8a8" stroke-width="1.2"/>
<polyline points="327.5,512.7 360.6,541.2 393.7,513 426.8,598.2 459.8,595.3 492.9,593.9 525.6,599.9 558.7,588.3 591.8,577.4 624.9,583.4 657.9,625.3 690.7,589.4 723.7,617.5 756.8,590" fill="none" stroke="#86abe4" stroke-width="1.15"/>
<circle cx="327.5" cy="512.7" r="3.3" fill="#fdfdfd" stroke="#86abe4" stroke-width="1.2"/>
<circle cx="360.6" cy="541.2" r="3.3" fill="#fdfdfd" stroke="#86abe4" stroke-width="1.2"/>
<circle cx="393.7" cy="513" r="3.3" fill="#fdfdfd" stroke="#86abe4" stroke-width="1.2"/>
<circle cx="426.8" cy="598.2" r="3.3" fill="#fdfdfd" stroke="#86abe4" stroke-width="1.2"/>
<circle cx="459.8" cy="595.3" r="3.3" fill="#fdfdfd" stroke="#86abe4" stroke-width="1.2"/>
<circle cx="492.9" cy="593.9" r="3.3" fill="#fdfdfd" stroke="#86abe4" stroke-width="1.2"/>
<circle cx="525.6" cy="599.9" r="3.3" fill="#fdfdfd" stroke="#86abe4" stroke-width="1.2"/>
<circle cx="558.7" cy="588.3" r="3.3" fill="#fdfdfd" stroke="#86abe4" stroke-width="1.2"/>
<circle cx="591.8" cy="577.4" r="3.3" fill="#fdfdfd" stroke="#86abe4" stroke-width="1.2"/>
<circle cx="624.9" cy="583.4" r="3.3" fill="#fdfdfd" stroke="#86abe4" stroke-width="1.2"/>
<circle cx="657.9" cy="625.3" r="3.3" fill="#fdfdfd" stroke="#86abe4" stroke-width="1.2"/>
<circle cx="690.7" cy="589.4" r="3.3" fill="#fdfdfd" stroke="#86abe4" stroke-width="1.2"/>
<circle cx="723.7" cy="617.5" r="3.3" fill="#fdfdfd" stroke="#86abe4" stroke-width="1.2"/>
<circle cx="756.8" cy="590" r="3.3" fill="#fdfdfd" stroke="#86abe4" stroke-width="1.2"/>
<text transform="translate(268 569) rotate(-90)" font-family="Liberation Sans" font-size="13.5" fill="#666" letter-spacing="0.3" text-anchor="middle">hours</text>
</svg>
<svg class="abs" style="left:262px;top:691px;z-index:2" width="16" height="16" viewBox="0 0 16 16"><path d="M13.2 6.2 A5.6 5.6 0 1 0 13.4 9.6" fill="none" stroke="#333" stroke-width="1.4"/><path d="M10.6 5.6 L14 6.4 L13.9 2.6 Z" fill="#333"/></svg>
<div class="t" style="left:289px;top:692px;font-size:12.5px;line-height:15px;color:#555;letter-spacing:0.1px;font-weight:400;z-index:2;">3 hours ago</div>
<div class="abs" style="left:591px;top:683px;width:131px;height:32px;background:#fdfdfd;border:1px solid #e2e2e2;border-radius:5px;z-index:2"></div><div class="t" style="left:603px;top:691px;font-size:14px;line-height:16px;color:#333;letter-spacing:0.4px;z-index:2">p50 (Median)</div><svg class="abs" style="left:701px;top:695px;z-index:2" width="10" height="7" viewBox="0 0 10 7"><path d="M0.8 1 L5 6 L9.2 1" fill="none" stroke="#c8c8c8" stroke-width="1.1"/></svg>
<svg class="abs" style="left:744px;top:693px;z-index:2" width="12" height="12" viewBox="0 0 12 12"><path d="M0.5 0.5 L4.3 4.3 M11.5 0.5 L7.7 4.3 M0.5 11.5 L4.3 7.7 M11.5 11.5 L7.7 7.7" stroke="#222" stroke-width="1.5"/><path d="M0 0 H3.6 L0 3.6 Z M12 0 H8.4 L12 3.6 Z M0 12 H3.6 L0 8.4 Z M12 12 H8.4 L12 8.4 Z" fill="#222"/></svg>
<div class="card" style="left:797px;top:387px;width:1089px;height:368px"></div>
<div class="abs" style="left:797px;top:455px;width:1089px;height:1px;background:#ededed;z-index:1"></div>
<div class="t" style="left:812px;top:411px;font-size:16px;line-height:19px;color:#3a3a3a;letter-spacing:0.4px;font-weight:400;z-index:2;">Expected Battery Life</div>
<svg class="abs" style="left:981px;top:411px;z-index:2" width="18" height="18" viewBox="0 0 18 18"><circle cx="9" cy="9" r="7.4" fill="none" stroke="#333" stroke-width="1.4"/><path d="M6.8 7.2 C6.8 5.8 7.8 5 9 5 C10.3 5 11.2 5.8 11.2 7 C11.2 8.4 9 8.6 9 10.2" fill="none" stroke="#333" stroke-width="1.4"/><circle cx="9" cy="12.6" r="0.9" fill="#333"/></svg>
<svg class="abs" style="left:1751px;top:413px;z-index:2" width="15" height="15" viewBox="0 0 15 15"><path d="M3 11 L3.6 8.4 L10.2 1.8 L12.4 4 L5.8 10.6 Z" fill="none" stroke="#4a82dc" stroke-width="1.4" stroke-linejoin="round"/><path d="M0.5 13.8 H14" stroke="#4a82dc" stroke-width="1.5"/></svg>
<div class="abs" style="left:1782px;top:410px;width:88px;height:22px;background:#e4f1fb;border:1px solid #a9cdee;border-radius:3px;z-index:2"></div><svg class="abs" style="left:1790px;top:416px;z-index:2" width="11" height="10" viewBox="0 0 11 10"><path d="M0.7 0.7 H10.3 L6.6 5.5 V9.3 H4.4 V5.5 Z" fill="none" stroke="#4c83d6" stroke-width="1.3" stroke-linejoin="round"/><path d="M2.5 3 H8.5" stroke="#4c83d6" stroke-width="1.2"/></svg><div class="t" style="left:1809px;top:414px;font-size:12px;line-height:15px;color:#4f7cc2;letter-spacing:0.3px;z-index:2">Drilldown</div>
<div class="t" style="left:812px;top:474px;font-size:24px;line-height:28px;color:#161c27;letter-spacing:0.35px;font-weight:700;z-index:2;">74.2 hours</div>
<svg class="abs" style="left:812.0px;top:504.1px;z-index:2" width="17" height="17" viewBox="0 0 17 17"><circle cx="8.5" cy="8.5" r="8.2" fill="#5b93e6"/><text x="8.5" y="12.6" font-family="Liberation Sans" font-size="11.5" font-weight="700" fill="#fff" text-anchor="middle">A</text></svg>
<div class="t" style="left:836px;top:506px;font-size:14px;line-height:16px;color:#333;letter-spacing:0.1px;font-weight:400;z-index:2;">Overall</div>
<div class="t" style="left:812px;top:532px;font-size:24px;line-height:28px;color:#161c27;letter-spacing:0.5px;font-weight:700;z-index:2;">43.8 hours</div>
<svg class="abs" style="left:812.0px;top:562.0px;z-index:2" width="17" height="17" viewBox="0 0 17 17"><circle cx="8.5" cy="8.5" r="8.2" fill="#c0287f"/><text x="8.5" y="12.6" font-family="Liberation Sans" font-size="11.5" font-weight="700" fill="#fff" text-anchor="middle">B</text></svg>
<div class="t" style="left:836px;top:564px;font-size:14px;line-height:16px;color:#333;letter-spacing:0.1px;font-weight:400;z-index:2;">Workout</div>
<svg class="abs" style="left:0;top:0;z-index:1" width="1920" height="1080">
<line x1="1128" y1="477.5" x2="1866" y2="477.5" stroke="#eeeeee" stroke-width="1"/>
<text x="1123" y="481" font-family="Liberation Sans" font-size="11" fill="#666" text-anchor="end">80</text>
<line x1="1128" y1="528.5" x2="1866" y2="528.5" stroke="#eeeeee" stroke-width="1"/>
<text x="1123" y="532" font-family="Liberation Sans" font-size="11" fill="#666" text-anchor="end">70</text>
<line x1="1128" y1="581.5" x2="1866" y2="581.5" stroke="#eeeeee" stroke-width="1"/>
<text x="1123" y="585" font-family="Liberation Sans" font-size="11" fill="#666" text-anchor="end">60</text>
<line x1="1128" y1="633.5" x2="1866" y2="633.5" stroke="#eeeeee" stroke-width="1"/>
<text x="1123" y="637" font-family="Liberation Sans" font-size="11" fill="#666" text-anchor="end">50</text>
<text x="1123" y="690" font-family="Liberation Sans" font-size="11" fill="#666" text-anchor="end">40</text>
<rect x="1261" y="507" width="100" height="179" fill="#aecbf4"/>
<rect x="1631" y="667" width="100" height="19" fill="#e092c3"/>
<line x1="1128" y1="686" x2="1866" y2="686" stroke="#a8a8a8" stroke-width="2"/>
<line x1="1311" y1="687" x2="1311" y2="692" stroke="#a8a8a8" stroke-width="1.2"/>
<line x1="1681" y1="687" x2="1681" y2="692" stroke="#a8a8a8" stroke-width="1.2"/>
<text transform="translate(1099 581) rotate(-90)" font-family="Liberation Sans" font-size="13.5" fill="#666" letter-spacing="0.3" text-anchor="middle">hours</text>
</svg>
<svg class="abs" style="left:1302.5px;top:689.5px;z-index:2" width="17" height="17" viewBox="0 0 17 17"><circle cx="8.5" cy="8.5" r="8.2" fill="#5b93e6"/><text x="8.5" y="12.6" font-family="Liberation Sans" font-size="11.5" font-weight="700" fill="#fff" text-anchor="middle">A</text></svg>
<svg class="abs" style="left:1672.5px;top:689.5px;z-index:2" width="17" height="17" viewBox="0 0 17 17"><circle cx="8.5" cy="8.5" r="8.2" fill="#c0287f"/><text x="8.5" y="12.6" font-family="Liberation Sans" font-size="11.5" font-weight="700" fill="#fff" text-anchor="middle">B</text></svg>
<svg class="abs" style="left:816px;top:715px;z-index:2" width="16" height="16" viewBox="0 0 16 16"><path d="M13.2 6.2 A5.6 5.6 0 1 0 13.4 9.6" fill="none" stroke="#333" stroke-width="1.4"/><path d="M10.6 5.6 L14 6.4 L13.9 2.6 Z" fill="#333"/></svg>
<div class="t" style="left:843px;top:716px;font-size:12.5px;line-height:15px;color:#555;letter-spacing:0.1px;font-weight:400;z-index:2;">3 hours ago</div>
<div class="abs" style="left:1699px;top:707px;width:131px;height:32px;background:#fdfdfd;border:1px solid #e2e2e2;border-radius:5px;z-index:2"></div><div class="t" style="left:1711px;top:715px;font-size:14px;line-height:16px;color:#333;letter-spacing:0.4px;z-index:2">p50 (Median)</div><svg class="abs" style="left:1809px;top:719px;z-index:2" width="10" height="7" viewBox="0 0 10 7"><path d="M0.8 1 L5 6 L9.2 1" fill="none" stroke="#c8c8c8" stroke-width="1.1"/></svg>
<svg class="abs" style="left:1852px;top:717px;z-index:2" width="12" height="12" viewBox="0 0 12 12"><path d="M0.5 0.5 L4.3 4.3 M11.5 0.5 L7.7 4.3 M0.5 11.5 L4.3 7.7 M11.5 11.5 L7.7 7.7" stroke="#222" stroke-width="1.5"/><path d="M0 0 H3.6 L0 3.6 Z M12 0 H8.4 L12 3.6 Z M0 12 H3.6 L0 8.4 Z M12 12 H8.4 L12 8.4 Z" fill="#222"/></svg>
<svg class="abs" style="left:1734px;top:421px;z-index:3" width="14" height="21" viewBox="0 0 14 21"><path d="M1 1 V16.5 L4.6 13.2 L7.2 19.2 L9.6 18.2 L7.1 12.3 L12 12.3 Z" fill="#fff" stroke="#555" stroke-width="1.1" stroke-linejoin="round"/></svg>
<div class="card" style="left:243px;top:773px;width:535px;height:320px"></div>
<div class="abs" style="left:243px;top:841px;width:535px;height:1px;background:#ededed;z-index:1"></div>
<svg class="abs" style="left:262px;top:798px;z-index:2" width="17" height="18" viewBox="0 0 17 18"><path d="M0.7 0.5 H8.5 L12.3 4.3 V16.5 H0.7 Z" fill="#f3f3f3" stroke="#cfcfcf" stroke-width="0.9"/><path d="M2.8 6.3 H9.5 M2.8 9 H7.5" stroke="#9a9a9a" stroke-width="0.8"/><path d="M4.6 14.2 L12.6 7.6" stroke="#b99ea2" stroke-width="3.2"/><circle cx="13.8" cy="6.6" r="1.9" fill="#dc62c4"/><circle cx="13.9" cy="6.5" r="0.9" fill="#555"/></svg>
<div class="t" style="left:284px;top:797px;font-size:16px;line-height:19px;color:#3a3a3a;letter-spacing:0.3px;font-weight:400;z-index:2;">Sessions</div>
<svg class="abs" style="left:738px;top:799px;z-index:2" width="15" height="15" viewBox="0 0 15 15"><path d="M3 11 L3.6 8.4 L10.2 1.8 L12.4 4 L5.8 10.6 Z" fill="none" stroke="#4a82dc" stroke-width="1.4" stroke-linejoin="round"/><path d="M0.5 13.8 H14" stroke="#4a82dc" stroke-width="1.5"/></svg>
<div class="t" style="left:258px;top:860px;font-size:14px;line-height:17px;color:#444;letter-spacing:0.45px;font-weight:400;z-index:2;">Sessions provide an alternative to periodic Heartbeat reports by</div>
<div class="t" style="left:258px;top:882px;font-size:14px;line-height:17px;color:#444;letter-spacing:0.45px;font-weight:400;z-index:2;">aggregating Metrics from readings over a custom time period. For detailed</div>
<div class="t" style="left:258px;top:904px;font-size:14px;line-height:17px;color:#444;letter-spacing:0.45px;font-weight:400;z-index:2;">instructions on implementing Sessions, refer to the following SDK</div>
<div class="t" style="left:258px;top:926px;font-size:14px;line-height:17px;color:#444;letter-spacing:0.45px;font-weight:400;z-index:2;">documentation:</div>
<div class="abs" style="left:283px;top:968px;width:5px;height:5px;border-radius:50%;background:#222;z-index:2"></div>
<div class="t" style="left:298px;top:962px;font-size:14px;line-height:17px;color:#5386d4;letter-spacing:0.3px;font-weight:400;z-index:2;">Linux</div>
<div class="abs" style="left:283px;top:990px;width:5px;height:5px;border-radius:50%;background:#222;z-index:2"></div>
<div class="t" style="left:298px;top:984px;font-size:14px;line-height:17px;color:#5386d4;letter-spacing:0.3px;font-weight:400;z-index:2;">Android</div>
<div class="abs" style="left:283px;top:1012px;width:5px;height:5px;border-radius:50%;background:#222;z-index:2"></div>
<div class="t" style="left:298px;top:1006px;font-size:14px;line-height:17px;color:#5386d4;letter-spacing:0.3px;font-weight:400;z-index:2;">MCU</div>

<!-- HEADER -->
<div id="hdr">
  <div class="t" style="left:16px;top:12px;font-size:14px;line-height:16px;color:#3d3d3d">Data collected on...</div>
  <div class="abs" style="left:16px;top:38px;width:1646px;height:66px;background:#f0f0f0;border:1px solid #e2e2e2;border-radius:4px"></div>
  <div class="abs" style="left:21px;top:41px;width:139px;height:32px;background:#fefefe;border:1px solid #e4e4e4;border-radius:5px"></div>
  <div class="t" style="left:55px;top:49px;font-size:14px;line-height:16px;color:#3b3b3b">All Devices</div>
  <div class="abs" style="left:163px;top:41px;width:1496px;height:32px;background:#fdfdfd;border:1px solid #e4e4e4;border-radius:5px"></div>
  <div class="t" style="left:175px;top:49px;font-size:14px;line-height:16px;color:#c5c5c5">All Software Versions</div>
  <svg class="abs" style="left:1637px;top:52px" width="12" height="8" viewBox="0 0 12 8"><path d="M1 1.5 L6 6.5 L11 1.5" fill="none" stroke="#c7c7c7" stroke-width="1.1"/></svg>
  <!-- A / B -->
  <svg class="abs" style="left:21px;top:78px" width="17" height="17" viewBox="0 0 17 17"><circle cx="8.5" cy="8.5" r="8.2" fill="#5b93e6"/><text x="8.5" y="12.6" font-family="Liberation Sans" font-size="11.5" font-weight="700" fill="#fff" text-anchor="middle">A</text></svg>
  <div class="t" style="left:44px;top:80px;font-size:14px;line-height:16px;color:#444">Overall</div>
  <svg class="abs" style="left:106px;top:78px" width="17" height="17" viewBox="0 0 17 17"><circle cx="8.5" cy="8.5" r="8.2" fill="#c0287f"/><text x="8.5" y="12.6" font-family="Liberation Sans" font-size="11.5" font-weight="700" fill="#fff" text-anchor="middle">B</text></svg>
  <div class="t" style="left:130px;top:80px;font-size:14px;line-height:16px;color:#444">Workout</div>
  <svg class="abs" style="left:1640px;top:82px" width="14" height="14" viewBox="0 0 14 14"><circle cx="7" cy="7" r="6" fill="none" stroke="#c2c2c2" stroke-width="1.1"/><path d="M4.2 7 H9.8" stroke="#c2c2c2" stroke-width="1.1"/></svg>
  <!-- compare -->
  <div class="abs" style="left:16px;top:112px;width:115px;height:32px;background:#fbfbfb;border:1px solid #e2e2e2;border-radius:4px"></div>
  <svg class="abs" style="left:31px;top:120px" width="16" height="16" viewBox="0 0 16 16"><circle cx="8" cy="8" r="6.5" fill="none" stroke="#333" stroke-width="1.3"/><path d="M8 5 V11 M5 8 H11" stroke="#777" stroke-width="1.4"/></svg>
  <div class="t" style="left:54px;top:120px;font-size:14px;line-height:16px;color:#3d3d3d">Compare</div>
</div>

<div id="scroll">
  <svg class="abs" style="left:4px;top:5px" width="9" height="6" viewBox="0 0 9 6"><path d="M0.5 5.5 L4.5 0.5 L8.5 5.5 Z" fill="#555"/></svg>
  <div class="abs" style="left:2px;top:532px;width:13px;height:370px;background:#c1c1c1"></div>
  <svg class="abs" style="left:4px;top:1068px" width="9" height="6" viewBox="0 0 9 6"><path d="M0.5 0.5 L4.5 5.5 L8.5 0.5 Z" fill="#555"/></svg>
</div>

</body></html>
